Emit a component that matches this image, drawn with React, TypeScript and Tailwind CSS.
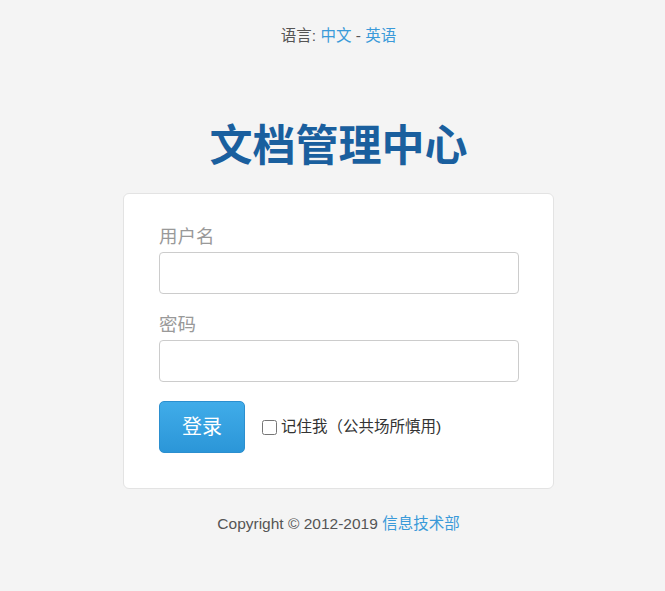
import React from "react";

export default function App() {
  const font = { fontFamily: '"Liberation Sans", "Noto Sans CJK SC", sans-serif' };
  return (
    <div className="min-h-[591px] w-full bg-[#f4f4f4] pl-[12px] pt-[26px]" style={font}>
      <div className="text-center text-[15.5px] leading-[20px] text-[#555]">
        语言: <a className="text-[#3a9ad9]">中文</a> - <a className="text-[#3a9ad9]">英语</a>
      </div>
      <h1 className="mt-[76px] text-center text-[43px] font-bold leading-[48px] text-[#1a5f9e]">
        文档管理中心
      </h1>
      <div className="mx-auto mt-[23px] w-[431px] rounded-md border border-[#e3e3e3] bg-white px-[35px] pb-[35px] pt-[31px]">
        <label className="mb-[3px] block text-[18.5px] leading-[24px] text-[#999]">用户名</label>
        <input className="block h-[42px] w-[360px] rounded-[4px] border border-[#ccc] bg-white px-3 outline-none" />
        <label className="mb-[3px] mt-[19px] block text-[18.5px] leading-[24px] text-[#999]">密码</label>
        <input type="password" className="block h-[42px] w-[360px] rounded-[4px] border border-[#ccc] bg-white px-3 outline-none" />
        <div className="mt-[19px] flex items-center">
          <button className="h-[52px] w-[86px] rounded-[5px] border border-[#2b8fcf] bg-gradient-to-b from-[#40ace9] to-[#2b96d8] text-[20px] text-white">
            登录
          </button>
          <label className="ml-[17px] flex items-center text-[15.5px] text-[#333]">
            <input type="checkbox" className="m-0 mr-[4px] h-[15px] w-[15px] rounded-[3px]" />
            记住我（公共场所慎用)
          </label>
        </div>
      </div>
      <div className="mt-[25px] text-center text-[15.5px] leading-[20px] text-[#555]">
        Copyright © 2012-2019 <a className="text-[#3a9ad9]">信息技术部</a>
      </div>
    </div>
  );
}
